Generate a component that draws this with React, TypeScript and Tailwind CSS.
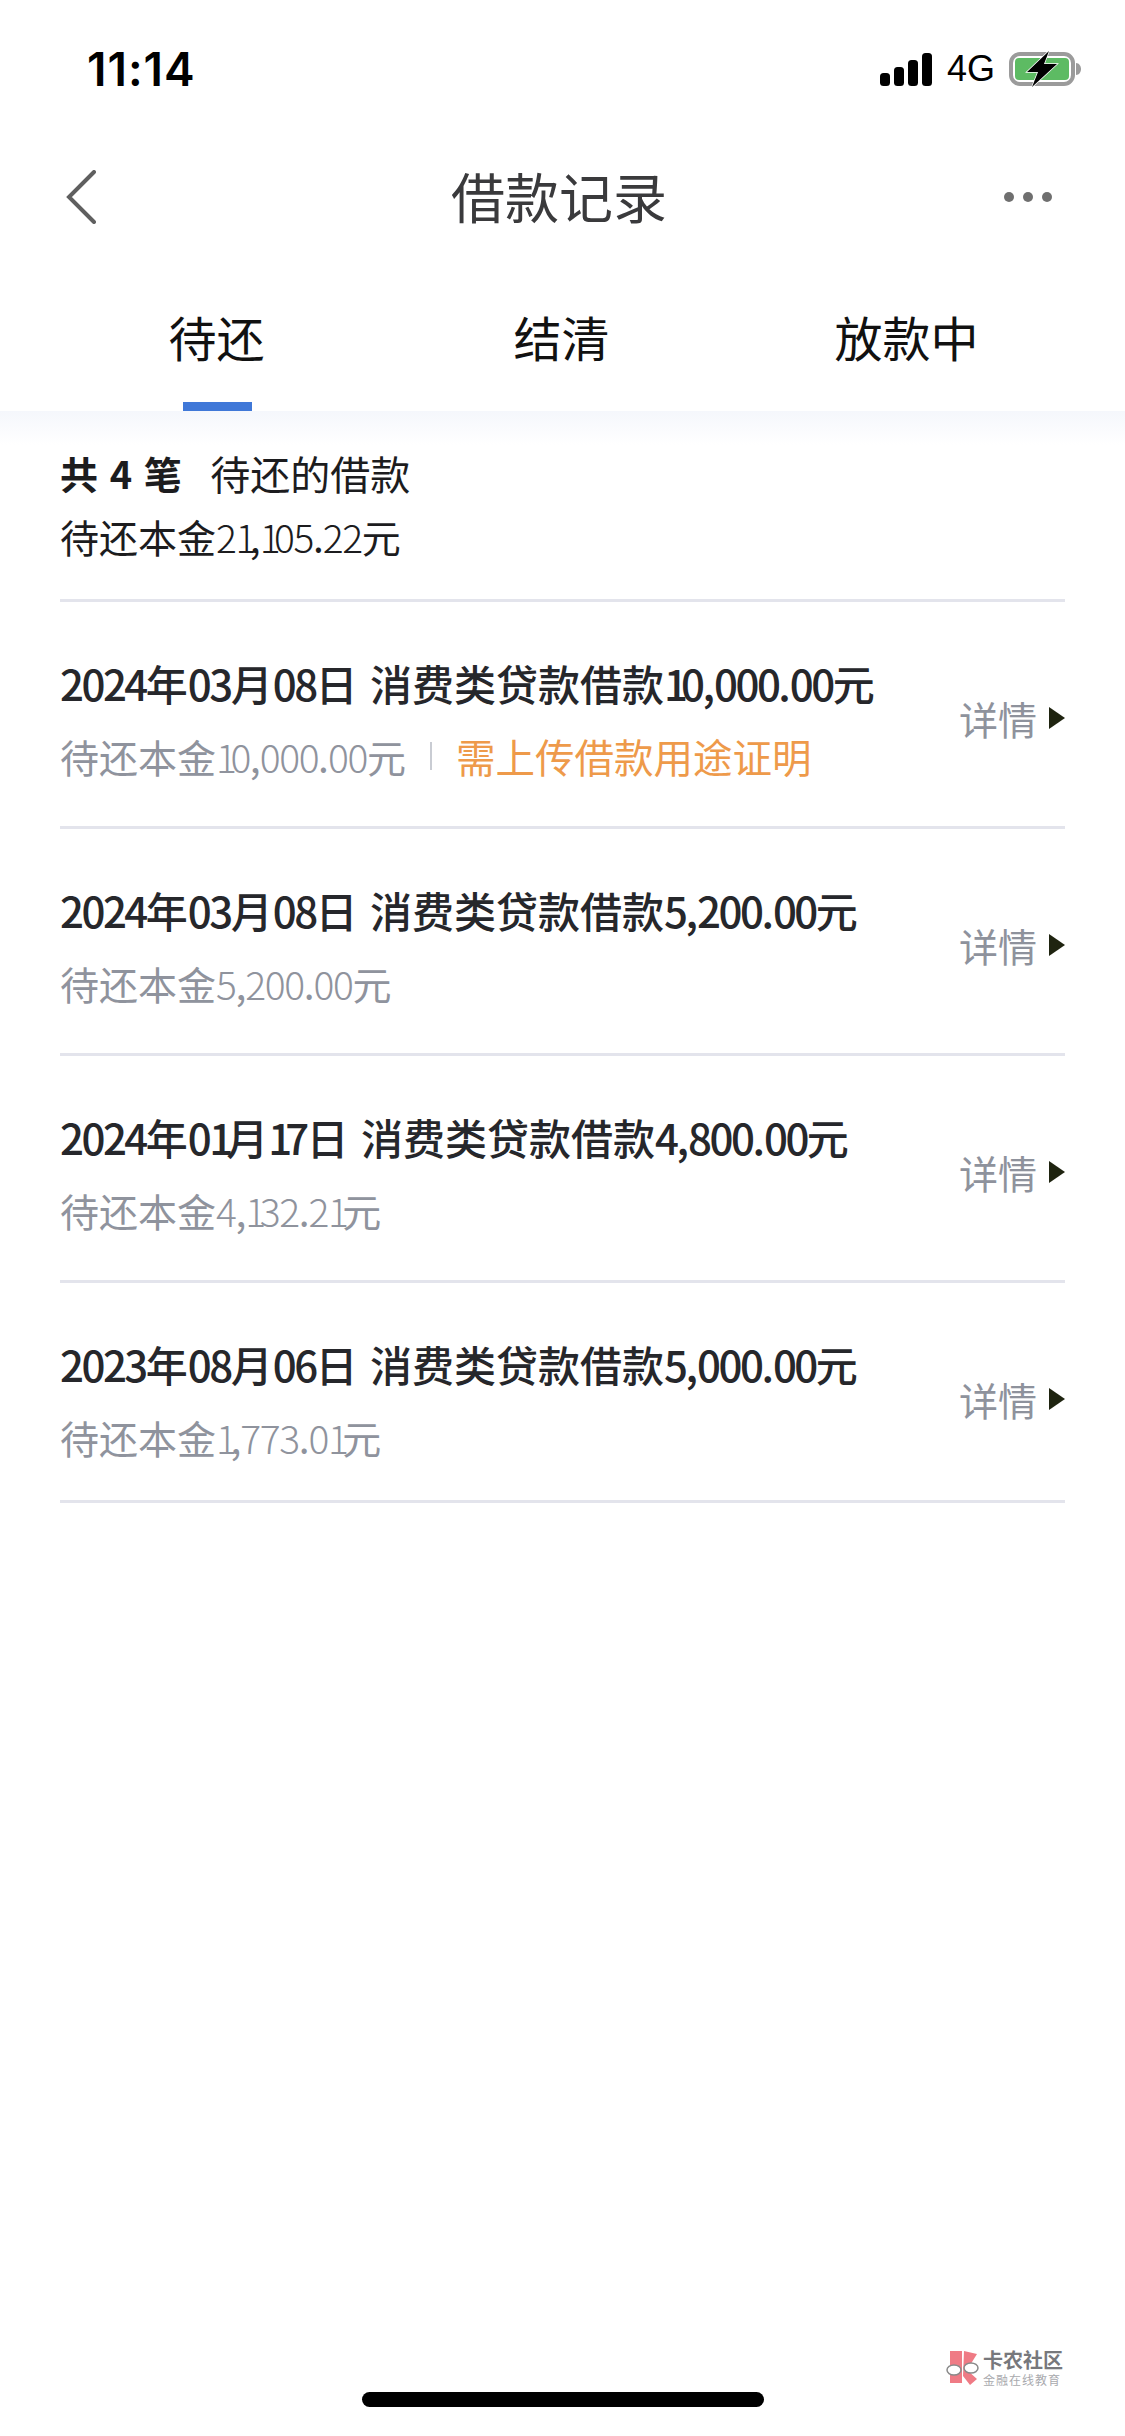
const loans = [
  { title: "2024年03月08日 消费类贷款借款10,000.00元", rest: "待还本金10,000.00元", notice: "需上传借款用途证明" },
  { title: "2024年03月08日 消费类贷款借款5,200.00元", rest: "待还本金5,200.00元" },
  { title: "2024年01月17日 消费类贷款借款4,800.00元", rest: "待还本金4,132.21元" },
  { title: "2023年08月06日 消费类贷款借款5,000.00元", rest: "待还本金1,773.01元", last: true },
];

// the app's number font is narrower than Noto, and its 1 is much narrower
function Narrow({ text, large }: { text: string; large?: boolean }) {
  const parts = text.split(/(1+|[02-9]+|[.,]+| )/).filter(Boolean);
  return (
    <>
      {parts.map((part, i) => {
        if (part[0] === "1") return <span key={i} className={large ? "tracking-[-7px]" : "tracking-[-6.5px] font-light"}>{part}</span>;
        if (/[02-9]/.test(part[0])) return <span key={i} className={large ? "tracking-[-2.5px]" : "tracking-[-1.4px] font-light"}>{part}</span>;
        if (part === "." || part === ",") return <span key={i} className="tracking-[-1px]">{part}</span>;
        if (part === " ") return <span key={i} className="tracking-[3px]">{part}</span>;
        return <span key={i}>{part}</span>;
      })}
    </>
  );
}

function StatusIcons() {
  return (
    <div className="flex items-center">
      <svg width="52" height="33" viewBox="0 0 52 33" fill="#000">
        <rect x="0" y="20" width="10" height="13" rx="3.5" />
        <rect x="14" y="14" width="10" height="19" rx="3.5" />
        <rect x="28" y="7" width="10" height="26" rx="3.5" />
        <rect x="42" y="0" width="10" height="33" rx="3.5" />
      </svg>
      <span className="ml-[15px] text-[36px] leading-none font-normal text-black [font-family:'Liberation_Sans',sans-serif]">4G</span>
      <svg className="ml-[14px]" width="73" height="36" viewBox="0 0 73 36">
        <rect x="2" y="3" width="62" height="30" rx="9" fill="none" stroke="#9b9b9b" strokeWidth="4" />
        <rect x="6" y="7" width="54" height="22" rx="4" fill="#5dbb63" />
        <path d="M67 12c3 0 5 3 5 6s-2 6-5 6z" fill="#9b9b9b" />
        <path d="M40 0 18 21h11l-6 15 25-23H35z" fill="#000" stroke="#fff" strokeWidth="1.5" paintOrder="stroke" />
      </svg>
    </div>
  );
}

function WatermarkLogo() {
  return (
    <svg width="36" height="36" viewBox="0 0 36 36">
      <rect x="5" y="1" width="12" height="32" fill="#ef7b85" />
      <path d="M19 1 32 4 22 20 32 29 25 35 18 26z" fill="#ef7b85" />
      <ellipse cx="9" cy="20" rx="7" ry="5" fill="#fff" stroke="#8a8a8a" strokeWidth="1.5" />
      <ellipse cx="26" cy="18" rx="7" ry="5" fill="#fff" stroke="#8a8a8a" strokeWidth="1.5" />
    </svg>
  );
}

function LoanRow({ title, rest, notice, last }: { title: string; rest: string; notice?: string; last?: boolean }) {
  return (
    <div className={`flex items-center justify-between border-b-[3px] border-[#e3e4ec] pt-[56px] ${last ? "pb-[38px]" : "pb-[45px]"}`}>
      <div>
        <div className="text-[42px] leading-[50px] font-medium text-[#26272b] whitespace-nowrap">
          <Narrow text={title} large />
        </div>
        <div className="mt-[23px] flex items-center text-[39px] leading-[50px] whitespace-nowrap">
          <span className="text-[#8f939d]"><Narrow text={rest} /></span>
          {notice && (
            <>
              <span className="mx-[24px] h-[28px] w-[2px] bg-[#c9ccd3]" />
              <span className="text-[39.5px] text-[#ee9a4a]">{notice}</span>
            </>
          )}
        </div>
      </div>
      <div className="-mt-[3px] flex items-center">
        <span className="text-[39px] leading-[50px] text-[#8e929c]">详情</span>
        <svg className="ml-[12px]" width="16" height="22" viewBox="0 0 16 22">
          <path d="M0 0 16 11 0 22z" fill="#1f2410" />
        </svg>
      </div>
    </div>
  );
}

export default function App() {
  return (
    <div className="flex h-[2436px] w-[1125px] flex-col overflow-hidden bg-white [font-family:'Noto_Sans_CJK_SC',sans-serif]">
      <div className="flex h-[138px] items-center justify-between pl-[87px] pr-[43px]">
        <span className="text-[46px] leading-none font-semibold tracking-[1px] text-black [font-family:'Inter',sans-serif]">11:14</span>
        <StatusIcons />
      </div>

      <div className="flex h-[118px] items-center justify-between pl-[66px] pr-[73px]">
        <div className="w-[48px]">
          <svg width="30" height="54" viewBox="0 0 30 54" fill="none" stroke="#5f5f5f" strokeWidth="4" strokeLinecap="round">
            <path d="M28 2 3 27l25 25" />
          </svg>
        </div>
        <span className="-mt-[2px] text-[54px] leading-none text-[#3a3a3c]">借款记录</span>
        <div className="flex w-[48px] gap-[9px]">
          <span className="h-[10px] w-[10px] rounded-full bg-[#6f6f6f]" />
          <span className="h-[10px] w-[10px] rounded-full bg-[#6f6f6f]" />
          <span className="h-[10px] w-[10px] rounded-full bg-[#6f6f6f]" />
        </div>
      </div>

      <div className="grid h-[155px] grid-cols-3 pl-[44px] pr-[46px]">
        <div className="flex flex-col items-center pt-[50px]">
          <span className="text-[48px] leading-[60px] text-[#111]">待还</span>
          <span className="mt-auto ml-[1px] h-[9px] w-[69px] bg-[#4078d8]" />
        </div>
        <div className="flex flex-col items-center pt-[50px]">
          <span className="text-[48px] leading-[60px] text-[#111]">结清</span>
        </div>
        <div className="flex flex-col items-center pt-[50px]">
          <span className="text-[48px] leading-[60px] text-[#111]">放款中</span>
        </div>
      </div>

      <div className="h-[34px] bg-gradient-to-b from-[#f5f7fc] to-white" />

      <div className="px-[60px]">
        <div className="flex h-[157px] flex-col border-b-[3px] border-[#e3e4ec]">
          <div className="mt-[3px] flex items-center text-[40px] leading-[50px] text-[#1c1c1e]">
            <span className="text-[38px] font-bold tracking-[1.5px]">共 4 笔</span>
            <span className="ml-[27px]">待还的借款</span>
          </div>
          <div className="mt-[13px] text-[39px] leading-[50px] text-[#1c1c1e]">
            <Narrow text="待还本金21,105.22元" />
          </div>
        </div>
        {loans.map((loan) => (
          <LoanRow key={loan.title} {...loan} />
        ))}
      </div>

      <div className="mt-auto flex items-center justify-end gap-[2px] pr-[62px]">
        <WatermarkLogo />
        <div className="flex flex-col">
          <span className="text-[20px] leading-[24px] font-bold text-[#77787c]">卡农社区</span>
          <span className="text-[12px] leading-[16px] tracking-[1px] text-[#a9aaae]">金融在线教育</span>
        </div>
      </div>
      <div className="mb-[29px] mt-[4px] h-[15px] w-[402px] self-center rounded-full bg-black" />
    </div>
  );
}
